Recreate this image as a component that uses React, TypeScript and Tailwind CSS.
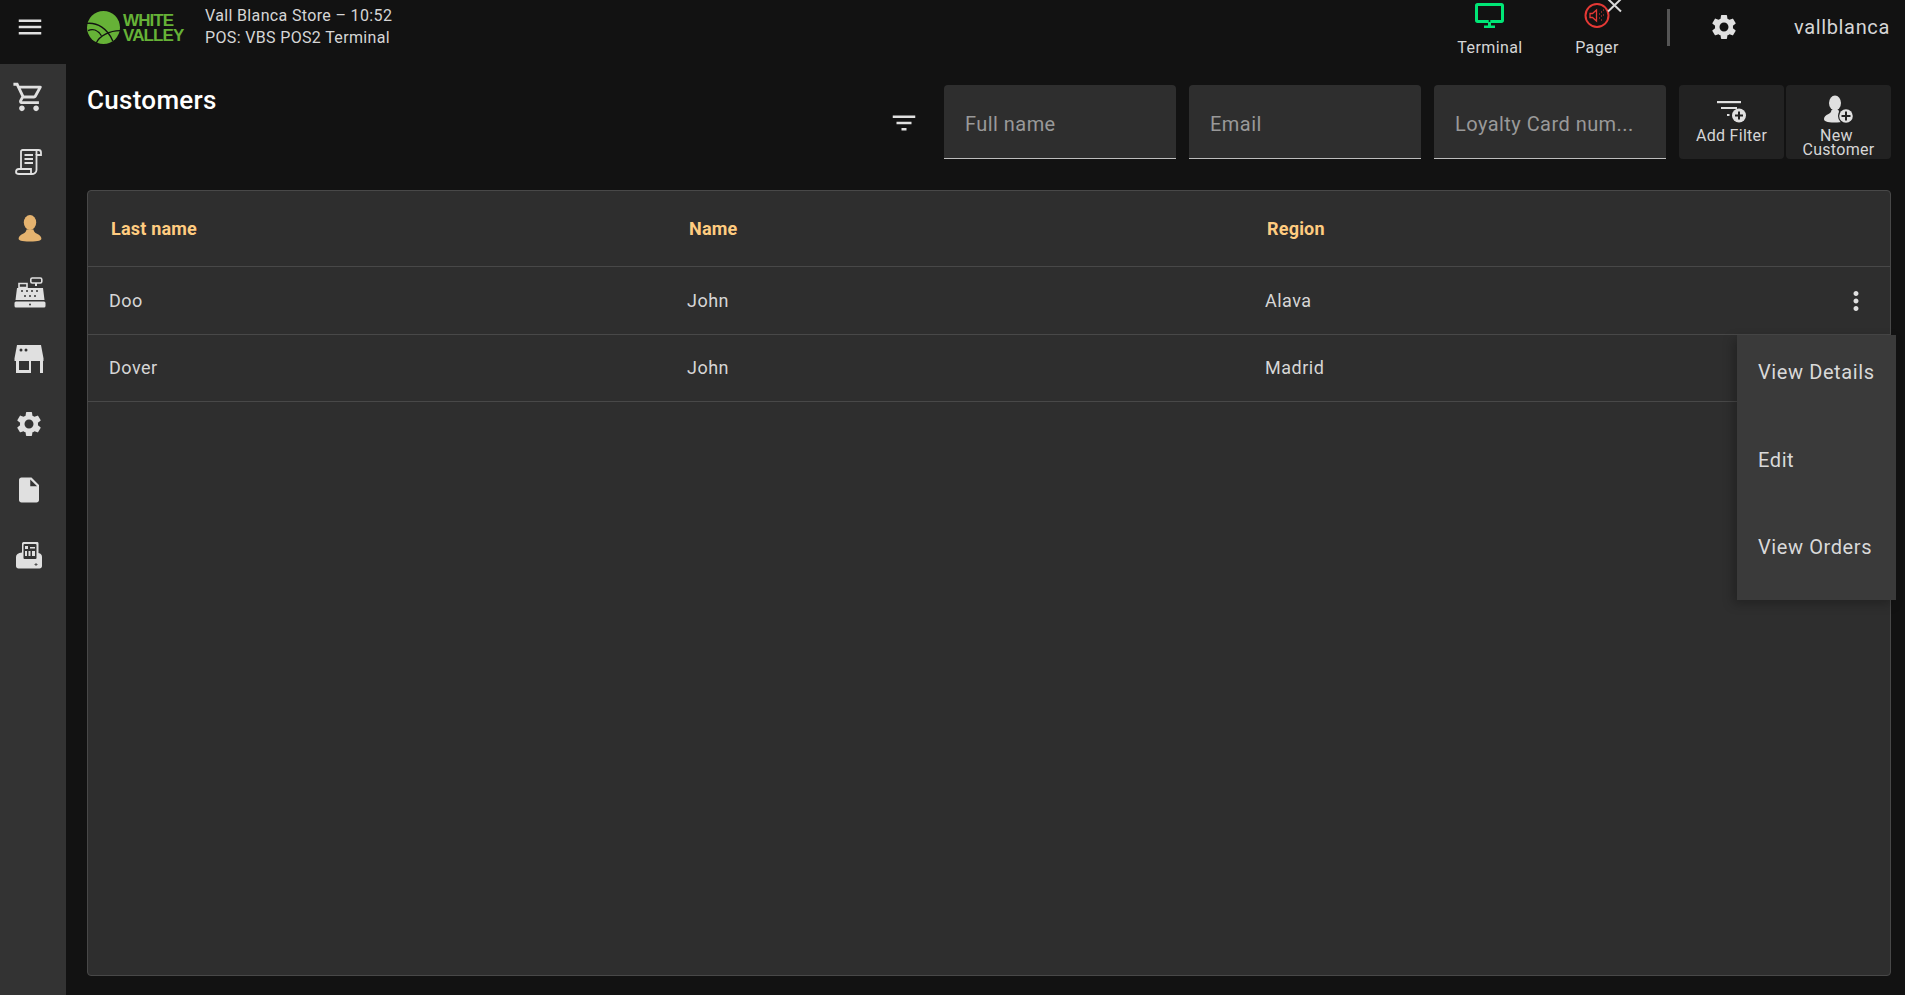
import { MdMenu, MdOutlineShoppingCart, MdSettings, MdInsertDriveFile, MdFilterList, MdMoreVert } from 'react-icons/md';

function Logo() {
  return (
    <div className="flex items-center w-[105px] h-[36px]">
      <svg width="33" height="33" viewBox="0 0 32 32" className="shrink-0">
        <circle cx="16" cy="16" r="16" fill="#66b237" />
        <path d="M0 12 C10 11 20 17 25 29" stroke="#121212" strokeWidth="1.3" fill="none" />
        <path d="M1 19 C6 17 11 19 14 24" stroke="#121212" strokeWidth="1.3" fill="none" />
        <path d="M9 31 C12 24 22 19 32 19" stroke="#121212" strokeWidth="1.3" fill="none" />
      </svg>
      <div className="ml-[3px] mt-[2px] font-bold text-[#66b237] text-[17px] leading-[15px] tracking-[-0.9px]" style={{ fontFamily: '"Liberation Sans", sans-serif' }}>
        <div>WHITE</div>
        <div>VALLEY</div>
      </div>
    </div>
  );
}

function ReceiptIcon() {
  return (
    <svg width="28" height="28" viewBox="0 0 28 28" fill="none" stroke="#e0e0e0" strokeWidth="1.8">
      <path d="M6 21V3.500C6 2.500 6.800 2 7.600 2H23.500C25 2 26 3 26 4.500V7H21.500V22C21.500 24.500 19 26 17 26H4" />
      <path d="M21.500 3V7" />
      <path d="M1 24C1 22 2 21 4 21H16V26H4C2 26 1 25.500 1 24Z" />
      <path d="M9.500 7H18M9.500 11H18M9.500 15H18" />
    </svg>
  );
}

function PersonIcon({ color = '#e5b36f' }: { color?: string }) {
  return (
    <svg width="24" height="28" viewBox="0 0 24 28" fill={color}>
      <ellipse cx="12" cy="8.500" rx="6.200" ry="7.500" />
      <path d="M8.500 15.500h7c.2 2 1.400 3.200 3.500 4.200 2.800 1.300 4.400 2.900 4.400 5 0 1.600-2.500 2.800-11.400 2.800S.6 26.300.6 24.700c0-2.100 1.600-3.700 4.400-5 2.100-1 3.300-2.200 3.500-4.200z" />
    </svg>
  );
}

function RegisterIcon() {
  return (
    <svg width="32" height="32" viewBox="0 0 32 32" fill="#e0e0e0">
      <rect x="16.800" y="1" width="11" height="5" rx="1.500" fill="none" stroke="#e0e0e0" strokeWidth="1.600" />
      <rect x="21" y="6" width="2" height="3" />
      <path d="M5 6.500h8v4H5z" fill="none" stroke="#e0e0e0" strokeWidth="1.600" />
      <path d="M3 11h26l1.500 12H1.500z" />
      <rect x="0.500" y="24.500" width="31" height="6" rx="1.500" />
      <g fill="#333333">
        <circle cx="8" cy="14" r="1" /><circle cx="13" cy="14" r="1" /><circle cx="18" cy="14" r="1" /><circle cx="23" cy="14" r="1" />
        <circle cx="11" cy="19" r="1" /><circle cx="16" cy="19" r="1" /><circle cx="21" cy="19" r="1" />
        <circle cx="16" cy="27.500" r="1" />
      </g>
    </svg>
  );
}

function StoreIcon() {
  return (
    <svg width="32" height="30" viewBox="0 0 32 30" fill="#e0e0e0">
      <path d="M4 1h24l2.500 13.500v2.500H1.500v-2.500z" />
      <path d="M3 17h3v12H3zM27 17h3v12h-3zM6 26h12v3H6zM16 17h2v10h-2z" />
      <circle cx="8" cy="6" r="1.500" fill="#333333" /><circle cx="13" cy="6" r="1.500" fill="#333333" />
    </svg>
  );
}

function FaxIcon() {
  return (
    <svg width="28" height="28" viewBox="0 0 28 28" fill="#e0e0e0">
      <path d="M7 2.500C7 1.500 8 1 9 1h13c1 0 1.500.5 1.500 1.500V12c2.500.5 3.500 2 3.500 4v9c0 1.500-1 2.500-2.500 2.500H3.500C2 27.500 1 26.500 1 25v-9c0-2.500 2-4 6-4.500z" />
      <rect x="8.500" y="3" width="13" height="15" rx="1" fill="#333333" />
      <path d="M10 5h3v3h-3zM15 6h5v1.500h-5zM10 10h2v5h-2zM13.500 10h2v5h-2zM17 10h3v5h-3z" />
      <path d="M20.500 22h1v1h1v1h-1v1h-1v-1h-1v-1h1z" fill="#555555" />
    </svg>
  );
}

function TerminalIcon() {
  return (
    <svg width="29" height="25" viewBox="0 0 29 25" fill="#00e676" className="block">
      <path fillRule="evenodd" d="M2.500 0h24C28 0 29 1 29 2.500V17.500C29 19 28 20 26.500 20h-24C1 20 0 19 0 17.500V2.500C0 1 1 0 2.500 0zM3 3v14h23V3z" />
      <rect x="3" y="17" width="23" height="1" fill="#00e676" />
      <path d="M13 19h3v3.500h4V25H9v-2.500h4z" />
      <circle cx="14.500" cy="18" r="1" fill="#121212" />
    </svg>
  );
}

function PagerIcon() {
  return (
    <svg width="50" height="25" viewBox="0 0 50 25" fill="none" className="block overflow-visible">
      <circle cx="25" cy="12.500" r="11.500" stroke="#e53935" strokeWidth="2" />
      <path d="M18 10.500h2.500l4-3.500v11l-4-3.500H18z" stroke="#e53935" strokeWidth="1.300" />
      <path d="M27 11h1M29 9h1M29 13h1M27 15h1M29 17h1M31 7h1M31 12h1" stroke="#e53935" strokeWidth="1.200" />
      <path d="M36 8.500L49 -4M36 -4L49 8.500" stroke="#d9d9d9" strokeWidth="2" />
    </svg>
  );
}

function AddFilterIcon() {
  return (
    <svg width="30" height="22" viewBox="0 0 30 22" fill="#e0e0e0" className="block">
      <rect x="0" y="0" width="24" height="2.200" />
      <rect x="4" y="6" width="16" height="2" />
      <rect x="10" y="13" width="2.500" height="2" />
      <circle cx="22" cy="14.500" r="7" />
      <path d="M21 10.500h2V13.500h3v2h-3v3h-2v-3h-3v-2h3z" fill="#222222" />
    </svg>
  );
}

function NewCustomerIcon() {
  return (
    <svg width="32" height="30" viewBox="0 0 32 30" fill="#e0e0e0" className="block">
      <ellipse cx="12" cy="8" rx="6" ry="7.500" />
      <path d="M8.500 15h7c.2 2 1.200 3 3 4 3 1 4 3 4 5 0 2-3 3.500-11 3.500S1 26 1 24c0-2 1.500-3.700 4.500-5 1.800-.9 2.800-2 3-4z" />
      <circle cx="23" cy="21" r="8" fill="#222222" />
      <circle cx="23" cy="21" r="6.800" />
      <path d="M22 16.500h2V20h3.500v2H24v3.500h-2V22h-3.500v-2H22z" fill="#222222" />
    </svg>
  );
}

function SideItem({ children }: { children: React.ReactNode }) {
  return <div className="h-[65.5px] w-[58px] flex items-center justify-center">{children}</div>;
}

function FilterField({ label }: { label: string }) {
  return (
    <div className="w-[232px] h-[74px] bg-[#2e2e2e] rounded-t-[4px] border-b border-[#bdbdbd] flex items-center px-[21px] pt-[4px] text-[20px] tracking-[0.45px] text-[#999999] truncate">
      {label}
    </div>
  );
}

export default function App() {
  const rows = [
    { last: 'Doo', name: 'John', region: 'Alava' },
    { last: 'Dover', name: 'John', region: 'Madrid' },
  ];

  return (
    <div className="relative w-full h-[995px] overflow-hidden bg-[#121212] text-[#d6d6d6] flex flex-col" style={{ fontFamily: 'Roboto, sans-serif' }}>
      <header className="h-[64px] flex items-start shrink-0">
        <div className="h-[54px] flex items-center">
          <div className="w-[59px] flex justify-center"><MdMenu size={30} color="#e0e0e0" /></div>
          <div className="ml-[28px]"><Logo /></div>
          <div className="ml-[13px] text-[16px] leading-[22px] tracking-[0.35px] text-[#d6d6d6]">
            <div>Vall Blanca Store – 10:52</div>
            <div>POS: VBS POS2 Terminal</div>
          </div>
        </div>
        <div className="ml-auto flex items-start h-full">
          <div className="flex flex-col items-center w-[90px] pt-[3px]">
            <TerminalIcon />
            <span className="text-[16px] leading-[20px] mt-[10px] tracking-[0.4px] text-[#d6d6d6]">Terminal</span>
          </div>
          <div className="flex flex-col items-center w-[66px] ml-[29px] pt-[3px]">
            <PagerIcon />
            <span className="text-[16px] leading-[20px] mt-[10px] tracking-[0.4px] text-[#d6d6d6]">Pager</span>
          </div>
          <div className="w-[3px] h-[37px] bg-[#555555] ml-[37px] mt-[9px]" />
          <div className="ml-[39px] mt-[12px]"><MdSettings size={30} color="#e0e0e0" /></div>
          <div className="ml-[55px] mr-[15px] h-[54px] flex items-center text-[20px] tracking-[0.65px] text-[#d6d6d6]">vallblanca</div>
        </div>
      </header>

      <div className="flex flex-1 min-h-0">
        <aside className="w-[66px] shrink-0 bg-[#333333]">
          <SideItem><MdOutlineShoppingCart size={34} color="#e0e0e0" /></SideItem>
          <SideItem><ReceiptIcon /></SideItem>
          <SideItem><div className="ml-[1px]"><PersonIcon /></div></SideItem>
          <SideItem><div className="ml-[1px]"><RegisterIcon /></div></SideItem>
          <SideItem><StoreIcon /></SideItem>
          <SideItem><MdSettings size={30} color="#e0e0e0" /></SideItem>
          <SideItem><MdInsertDriveFile size={30} color="#e0e0e0" /></SideItem>
          <SideItem><FaxIcon /></SideItem>
        </aside>

        <main className="flex-1 min-w-0 pl-[21px] pr-[14px] flex flex-col">
          <div className="flex items-start h-[126px] pt-[21px]">
            <h1 className="text-[26px] font-medium leading-[30px] tracking-[0.3px] text-white">Customers</h1>
            <div className="ml-auto flex items-center">
              <MdFilterList size={30} color="#e0e0e0" className="mr-[25px] mt-[2px]" />
              <div className="flex gap-[13px]">
                <FilterField label="Full name" />
                <FilterField label="Email" />
                <FilterField label="Loyalty Card num..." />
              </div>
              <button className="w-[105px] h-[74px] ml-[13px] bg-[#222222] rounded-[4px] flex flex-col items-center pt-[16px] text-[16px] leading-[14px] tracking-[0.3px] text-[#d6d6d6]">
                <AddFilterIcon />
                <span className="mt-[6px]">Add Filter</span>
              </button>
              <button className="w-[105px] h-[74px] ml-[2px] bg-[#222222] rounded-[4px] flex flex-col items-center pt-[10px] text-[16px] leading-[14px] tracking-[0.3px] text-[#d6d6d6]">
                <NewCustomerIcon />
                <span className="mt-[4px]">New&nbsp;<br />Customer</span>
              </button>
            </div>
          </div>

          <div className="h-[786px] bg-[#2e2e2e] border border-[#484848] rounded-[4px] mb-[19px]">
            <div className="grid grid-cols-[578px_578px_1fr] h-[76px] items-center border-b border-[#484848] px-[23px] text-[18px] font-bold tracking-[0.2px] text-[#ffcc80]">
              <div>Last name</div>
              <div>Name</div>
              <div>Region</div>
            </div>
            {rows.map((r, i) => (
              <div key={r.last} className="relative grid grid-cols-[578px_578px_1fr] h-[67.5px] items-center border-b border-[#484848] px-[21px] text-[18px] tracking-[0.5px] text-[#d6d6d6]">
                <div>{r.last}</div>
                <div>{r.name}</div>
                <div>{r.region}</div>
                {i === 0 && <MdMoreVert size={30} color="#e0e0e0" className="absolute right-[19px] top-[19px]" />}
              </div>
            ))}
          </div>
        </main>
      </div>

      <div className="absolute left-[1737px] top-[335px] w-[159px] h-[265px] bg-[#3a3a3a] shadow-[-4px_4px_10px_rgba(0,0,0,0.25)] pl-[21px] text-[20px] leading-[24px] tracking-[0.6px] text-[#d9d9d9] flex flex-col">
        <div className="h-[87.5px] pt-[25px]">View Details</div>
        <div className="h-[87.5px] pt-[25px]">Edit</div>
        <div className="h-[87.5px] pt-[25px]">View Orders</div>
      </div>
    </div>
  );
}
